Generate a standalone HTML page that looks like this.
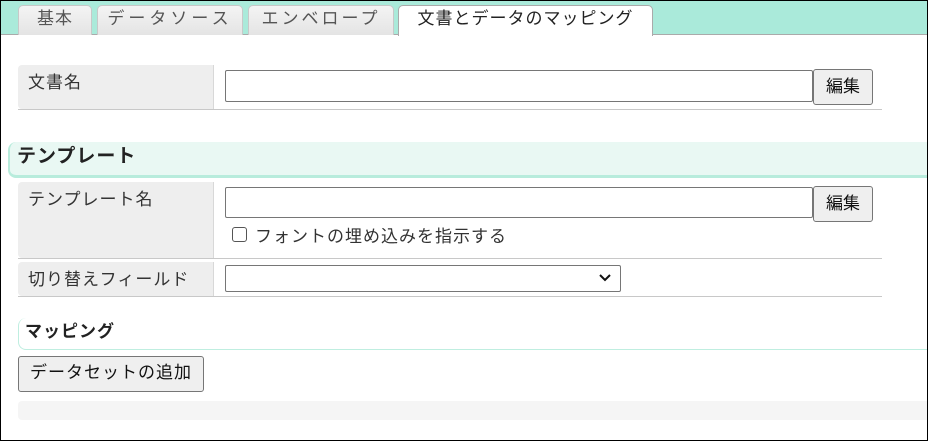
<!DOCTYPE html>
<html><head><meta charset="utf-8"><style>
*{box-sizing:border-box;margin:0;padding:0}
body{width:928px;height:441px;position:relative;overflow:hidden;background:#fff;font-family:"Liberation Sans","Noto Sans CJK JP",sans-serif;font-size:16px;color:#222}
.frame{position:absolute;left:0;top:0;width:928px;height:441px;border:1px solid #000;pointer-events:none;z-index:10}
.strip{position:absolute;left:0;top:0;width:928px;height:35px;background:#aaeada;border-bottom:1px solid #aaa}
.tab{position:absolute;top:5px;height:30px;background:linear-gradient(#f4f4f4,#e4e4e4);border:1px solid #c8c8c8;border-bottom:none;border-radius:5px 5px 0 0;color:#555;font-size:17px;line-height:25px;text-align:center;letter-spacing:1px}
.tab.act{background:#fff;color:#222;height:31px;border-color:#aaa}
.a{position:absolute}
.lab{position:absolute;left:18px;width:196px;background:#eee;border-radius:4px 0 0 4px;border-right:1px solid #d8d8d8;padding:3px 10px;font-size:17px;letter-spacing:1px;color:#333}
.line{position:absolute;height:1px;background:#c8c8c8}
.inp{position:absolute;left:225px;width:588px;height:32px;border:1px solid #767676;border-radius:2px;background:#fff}
.btn{position:absolute;background:#efefef;border:1px solid #767676;border-radius:3px;font-size:17px;text-align:center;color:#111}
</style></head><body>
<div class="strip"></div>
<div class="tab" style="left:18px;width:74px">基本</div>
<div class="tab" style="left:97px;width:146px;letter-spacing:4px">データソース</div>
<div class="tab" style="left:248px;width:146px;letter-spacing:3px">エンベロープ</div>
<div class="tab act" style="left:398px;width:255px">文書とデータのマッピング</div>

<div class="lab" style="top:65px;height:44px">文書名</div>
<div class="line" style="left:18px;top:109px;width:864px"></div>
<div class="inp" style="top:70px"></div>
<div class="btn" style="left:813px;top:69px;width:60px;height:36px;line-height:34px">編集</div>

<div class="a" style="left:8px;top:142px;width:925px;height:36px;background:#e9f8f3;border-left:2px solid #b8ecdc;border-bottom:3px solid #b8ecdc;border-radius:8px 0 0 8px;font-weight:bold;font-size:19px;letter-spacing:1px;line-height:30px;padding-left:7px;color:#222">テンプレート</div>

<div class="lab" style="top:182px;height:76px">テンプレート名</div>
<div class="line" style="left:18px;top:258px;width:864px"></div>
<div class="inp" style="top:187px;height:31px"></div>
<div class="btn" style="left:813px;top:186px;width:60px;height:36px;line-height:34px">編集</div>
<div class="a" style="left:232px;top:227px;width:15px;height:15px;border:1px solid #555;border-radius:3px"></div>
<div class="a" style="left:255px;top:226px;font-size:17px;letter-spacing:1px;line-height:22px;color:#333">フォントの埋め込みを指示する</div>

<div class="lab" style="top:262px;height:34px;padding-top:3px">切り替えフィールド</div>
<div class="line" style="left:18px;top:296px;width:864px"></div>
<div class="a" style="left:225px;top:265px;width:396px;height:27px;border:1px solid #767676;border-radius:2px"></div>
<svg class="a" style="left:598px;top:272px" width="14" height="12" viewBox="0 0 14 12"><path d="M2 3 L7 8 L12 3" stroke="#111" stroke-width="2" fill="none"/></svg>

<div class="a" style="left:18px;top:318px;width:915px;height:32px;border-left:1px solid #bfeee0;border-bottom:1px solid #bfeee0;border-radius:8px 0 0 8px;font-weight:bold;font-size:17px;letter-spacing:1px;line-height:27px;padding-left:6px">マッピング</div>
<div class="btn" style="left:18px;top:356px;width:186px;height:36px;line-height:32px;letter-spacing:1px">データセットの追加</div>
<div class="a" style="left:18px;top:401px;width:915px;height:19px;background:#f5f5f5;border-radius:4px"></div>
<div class="frame"></div>
</body></html>
